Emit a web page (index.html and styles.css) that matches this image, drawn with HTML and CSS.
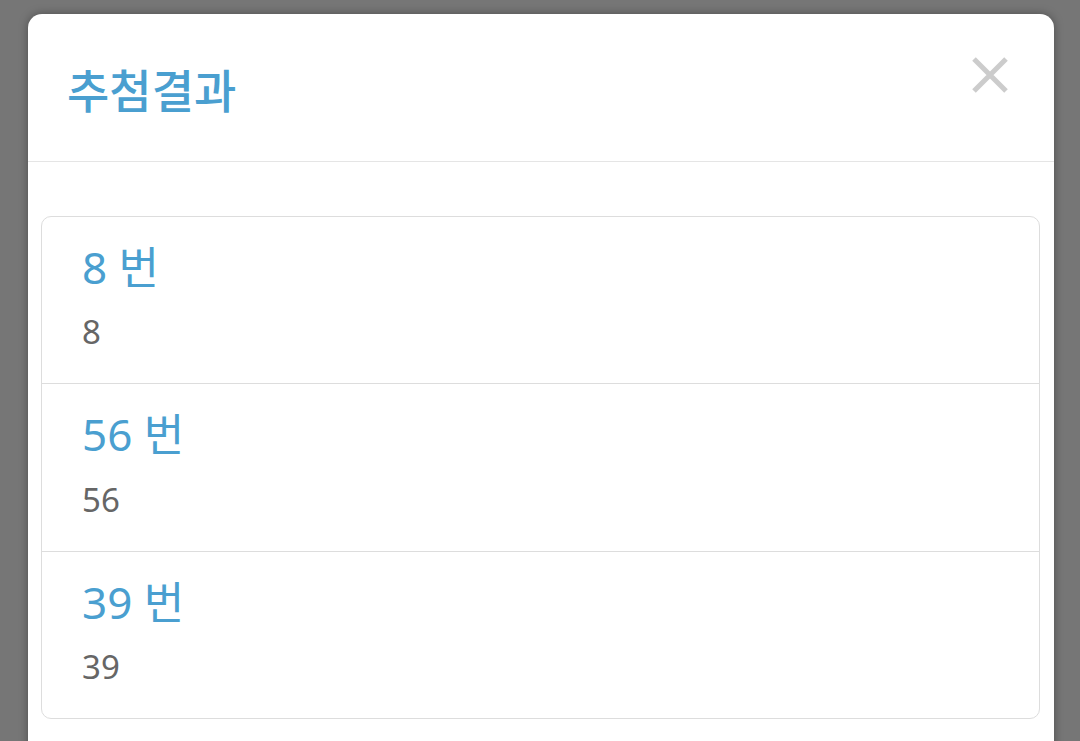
FILE: index.html
```html
<!DOCTYPE html>
<html lang="ko">
<head>
<meta charset="utf-8">
<title>추첨결과</title>
<link rel="stylesheet" href="styles.css">
</head>
<body>
<div class="backdrop">
  <div class="modal">
    <div class="modal-header">
      <h4 class="modal-title">추첨결과</h4>
      <button class="close" type="button" aria-label="Close">
        <svg width="36" height="36" viewBox="0 0 36 36" aria-hidden="true">
          <path d="M2 2 L34 34 M34 2 L2 34" stroke="#cccccc" stroke-width="5" fill="none"/>
        </svg>
      </button>
    </div>
    <div class="modal-body">
      <div class="list-group">
        <div class="list-group-item">
          <h4 class="item-heading">8 번</h4>
          <p class="item-text">8</p>
        </div>
        <div class="list-group-item">
          <h4 class="item-heading">56 번</h4>
          <p class="item-text">56</p>
        </div>
        <div class="list-group-item">
          <h4 class="item-heading">39 번</h4>
          <p class="item-text">39</p>
        </div>
      </div>
    </div>
  </div>
</div>
</body>
</html>
```

FILE: styles.css
```css
html, body {
  margin: 0;
  padding: 0;
  height: 100%;
  overflow: hidden;
}

body {
  background: #767676;
  font-family: "Noto Sans", "Noto Sans CJK KR", sans-serif;
}

.backdrop {
  padding: 14px 26px 0 28px;
  height: 100%;
  box-sizing: border-box;
}

.modal {
  background: #ffffff;
  border-radius: 14px 14px 0 0;
  box-shadow: 0 0 10px rgba(0, 0, 0, 0.35);
  height: 800px;
  box-sizing: border-box;
}

.modal-header {
  display: flex;
  justify-content: space-between;
  align-items: center;
  height: 148px;
  box-sizing: border-box;
  border-bottom: 1px solid #e5e5e5;
  padding: 0 46px 0 39px;
}

.modal-title {
  margin: 0;
  font-family: "Noto Sans CJK KR", "Noto Sans", sans-serif;
  font-size: 46px;
  font-weight: 500;
  line-height: 1.1;
  color: #4a9fd0;
  padding-top: 2px;
}

.close {
  align-self: flex-start;
  margin-top: 43px;
  padding: 0;
  border: 0;
  background: transparent;
  width: 36px;
  height: 36px;
  display: flex;
}

.modal-body {
  padding: 54px 14px 0 13px;
}

.list-group {
  border: 1px solid #dddddd;
  border-radius: 10px;
  display: flex;
  flex-direction: column;
}

.list-group-item {
  padding: 26px 40px 29px;
  border-top: 1px solid #dddddd;
}

.list-group-item:first-child {
  border-top: 0;
}

.item-heading {
  margin: 0 0 20px;
  font-size: 44px;
  font-weight: 400;
  line-height: 1.1;
  color: #4a9fd0;
}

.item-text {
  margin: 0;
  font-size: 33px;
  line-height: 1.3;
  color: #666666;
}
```
